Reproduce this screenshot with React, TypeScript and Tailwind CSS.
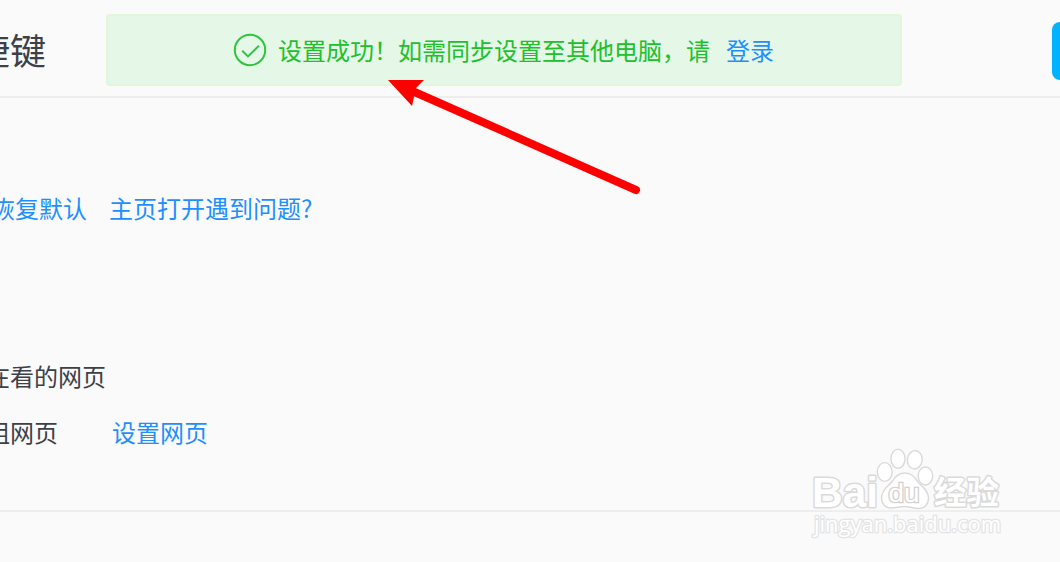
import type { ReactNode } from "react";

const links = ["恢复默认", "主页打开遇到问题?"];

function TextLink({ children, className = "" }: { children: ReactNode; className?: string }) {
  return (
    <a href="#" className={`text-[#1e8fff] whitespace-nowrap ${className}`}>
      {children}
    </a>
  );
}

function SuccessIcon() {
  return (
    <svg className="h-[34px] w-[34px] shrink-0" viewBox="0 0 34 34" fill="none" stroke="#2dc540" strokeWidth="2">
      <circle cx="17" cy="17" r="15.2" />
      <path d="M9.2 17.8l5.8 5.6L26 12.6" />
    </svg>
  );
}

function SuccessToast() {
  return (
    <div className="flex h-[72px] w-[796px] shrink-0 items-center rounded border-2 border-[#e1f6da] bg-[#e5f7e7] pl-[125px]">
      <SuccessIcon />
      <p className="ml-[11px] whitespace-nowrap text-[#20c02c]">设置成功！如需同步设置至其他电脑，请</p>
      <TextLink className="ml-4">登录</TextLink>
    </div>
  );
}

function Watermark() {
  return (
    <svg
      className="absolute left-[806px] top-[442px]"
      width="204"
      height="102"
      viewBox="806 442 204 102"
      fill="#ffffff"
      stroke="#dadada"
      strokeWidth="1.4"
    >
      <g strokeWidth="3" paintOrder="stroke" strokeLinejoin="round" className="font-bold">
        <text x="812" y="507" fontSize="42" textLength="66" lengthAdjust="spacingAndGlyphs" className="font-['Liberation_Sans']">
          Bai
        </text>
        <text x="934" y="504" fontSize="32" textLength="65" lengthAdjust="spacingAndGlyphs" className="font-['Noto_Sans_CJK_SC']">
          经验
        </text>
      </g>
      <ellipse cx="884.7" cy="472" rx="7.4" ry="9.4" />
      <ellipse cx="898" cy="458.7" rx="7" ry="9.6" />
      <ellipse cx="914.8" cy="459.8" rx="7.4" ry="9.2" transform="rotate(8 914.8 459.8)" />
      <ellipse cx="925.4" cy="476" rx="7.3" ry="9" />
      <path d="M904.5 473c-6 0-9.5 4-12 8-3 4.500-11 8-11 17 0 6 4 10 9.500 10 5 0 8-1.500 13.500-1.500s9 2 14 2c6 0 10-4 10-10.500 0-8-7-11.500-11-16.500-3-4.500-6-8.500-13-8.500z" />
      <text
        x="888.500"
        y="502"
        fontSize="26"
        textLength="31"
        lengthAdjust="spacingAndGlyphs"
        paintOrder="stroke"
        strokeWidth="2.600"
        stroke="#d2d2d2"
        className="font-['Liberation_Sans']"
      >
        du
      </text>
      <text
        x="814"
        y="532"
        fontSize="22"
        textLength="187"
        lengthAdjust="spacingAndGlyphs"
        paintOrder="stroke"
        strokeWidth="2.600"
        stroke="#e4e4e4"
        className="font-['Open_Sans'] font-medium"
      >
        jingyan.baidu.com
      </text>
    </svg>
  );
}

function Arrow() {
  return (
    <svg className="absolute left-[380px] top-[72px]" width="270" height="130" viewBox="380 72 270 130">
      <path d="M410 90L636 190" stroke="#ff0000" strokeWidth="8" strokeLinecap="round" />
      <path d="M388 80h36l-8 8-4 18z" fill="#ff0000" />
    </svg>
  );
}

export default function App() {
  return (
    <div className="relative h-[562px] w-[1060px] overflow-hidden bg-[#fafafa] font-['Noto_Sans_CJK_SC',sans-serif] text-2xl leading-8 text-[#3c4048]">
      <header className="flex h-[98px] items-start border-b-2 border-[#eeeeee] pt-3.5">
        <h1 className="-ml-[26px] mr-[60px] shrink-0 text-4xl leading-[70px]">捷键</h1>
        <SuccessToast />
        <button aria-label="登录" className="ml-[150px] mt-2 h-[58px] w-40 shrink-0 rounded-lg bg-[#00b2ff]" />
      </header>

      <main className="h-[414px] border-b-2 border-[#eeeeee] pt-[94px]">
        <div className="-ml-[9px] flex gap-[22px]">
          {links.map((label) => (
            <TextLink key={label}>{label}</TextLink>
          ))}
        </div>
        <div className="-ml-[14px] mt-[136px]">在看的网页</div>
        <div className="-ml-[14px] mt-6 flex gap-[54px]">
          <span>组网页</span>
          <TextLink>设置网页</TextLink>
        </div>
      </main>

      <Arrow />
      <Watermark />
    </div>
  );
}
